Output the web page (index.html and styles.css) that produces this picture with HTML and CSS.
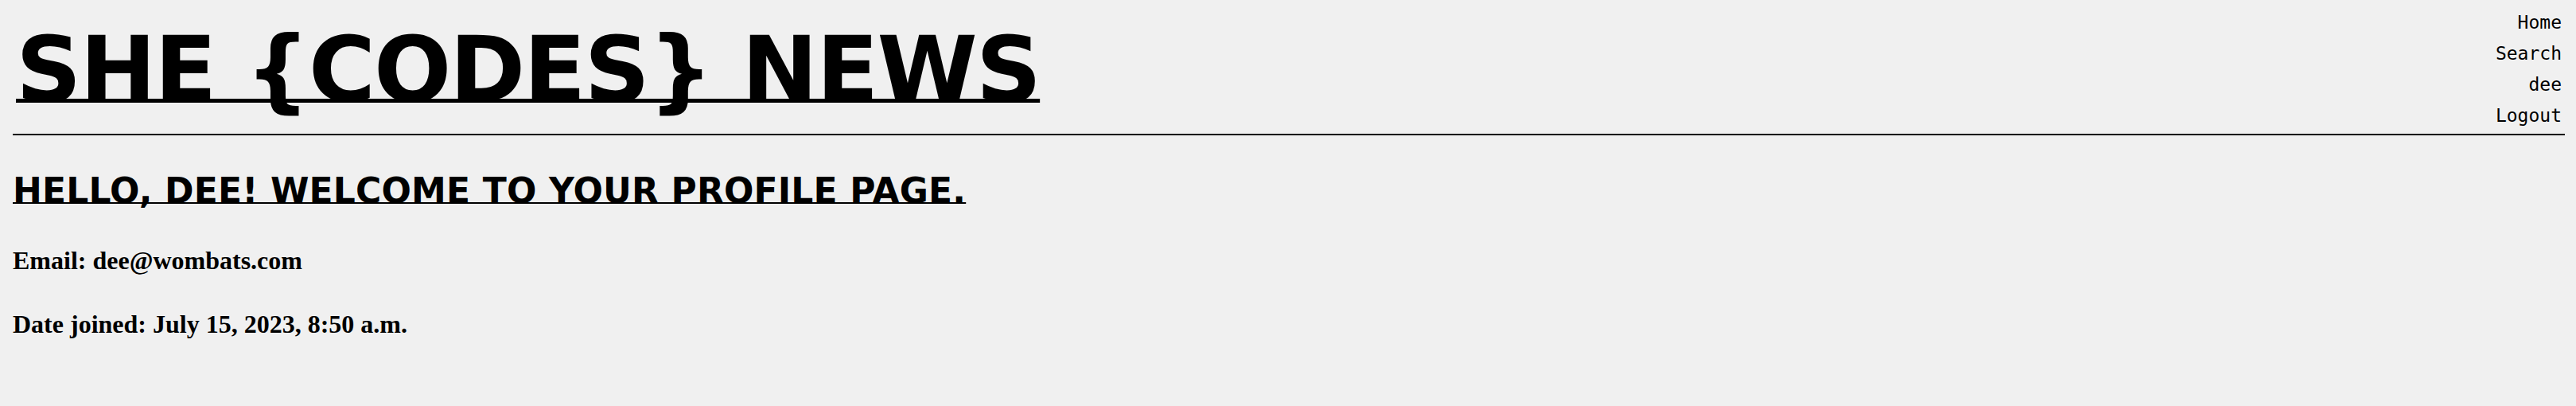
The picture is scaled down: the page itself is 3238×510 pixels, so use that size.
FILE: index.html
```html
<!DOCTYPE html>
<html lang="en">
<head>
<meta charset="utf-8">
<title>She Codes News - Profile</title>
<link rel="stylesheet" href="styles.css">
</head>
<body>
<header class="site-header">
  <h1 class="site-title"><a href="#">SHE {CODES} NEWS</a></h1>
  <nav class="site-nav">
    <a href="#">Home</a>
    <a href="#">Search</a>
    <a href="#">dee</a>
    <a href="#">Logout</a>
  </nav>
</header>
<main class="profile">
  <h2 class="profile-title"><a href="#">HELLO, DEE! WELCOME TO YOUR PROFILE PAGE.</a></h2>
  <p class="profile-field">Email: dee@wombats.com</p>
  <p class="profile-field">Date joined: July 15, 2023, 8:50 a.m.</p>
</main>
</body>
</html>
```
FILE: styles.css
```css
body {
  margin: 0;
  background: #f0f0f0;
  color: #000;
  font-family: "Liberation Serif", serif;
}

.site-header {
  display: flex;
  justify-content: space-between;
  align-items: flex-start;
  margin: 0 14px 0 16px;
  border-bottom: 2px solid #000;
}

.site-title {
  margin: 30px 0 0 4px;
  font-family: "DejaVu Sans", sans-serif;
  font-weight: 700;
  font-size: 114.5px;
  line-height: 115px;
  letter-spacing: -2px;
}

.site-title a {
  color: #000;
  text-decoration: underline;
  text-decoration-thickness: 5px;
  text-underline-offset: -3px;
  text-decoration-skip-ink: none;
}

.site-nav {
  display: flex;
  flex-direction: column;
  align-items: flex-end;
  padding: 9px 4px 3px 0;
  font-family: "DejaVu Sans Mono", monospace;
  font-size: 23px;
  line-height: 39px;
}

.site-nav a {
  color: #000;
  text-decoration: none;
}

.profile {
  margin: 0 14px 0 16px;
}

.profile-title {
  margin: 44px 0 0;
  font-family: "DejaVu Sans", sans-serif;
  font-weight: 700;
  font-size: 44px;
  line-height: 52px;
  letter-spacing: 0.17px;
}

.profile-title a {
  color: #000;
  text-decoration: underline;
  text-decoration-thickness: 2px;
  text-underline-offset: -1px;
  text-decoration-skip-ink: none;
}

.profile-field {
  margin: 43px 0;
  font-family: "Liberation Serif", serif;
  font-weight: 700;
  font-size: 32px;
  line-height: 37px;
}
```
